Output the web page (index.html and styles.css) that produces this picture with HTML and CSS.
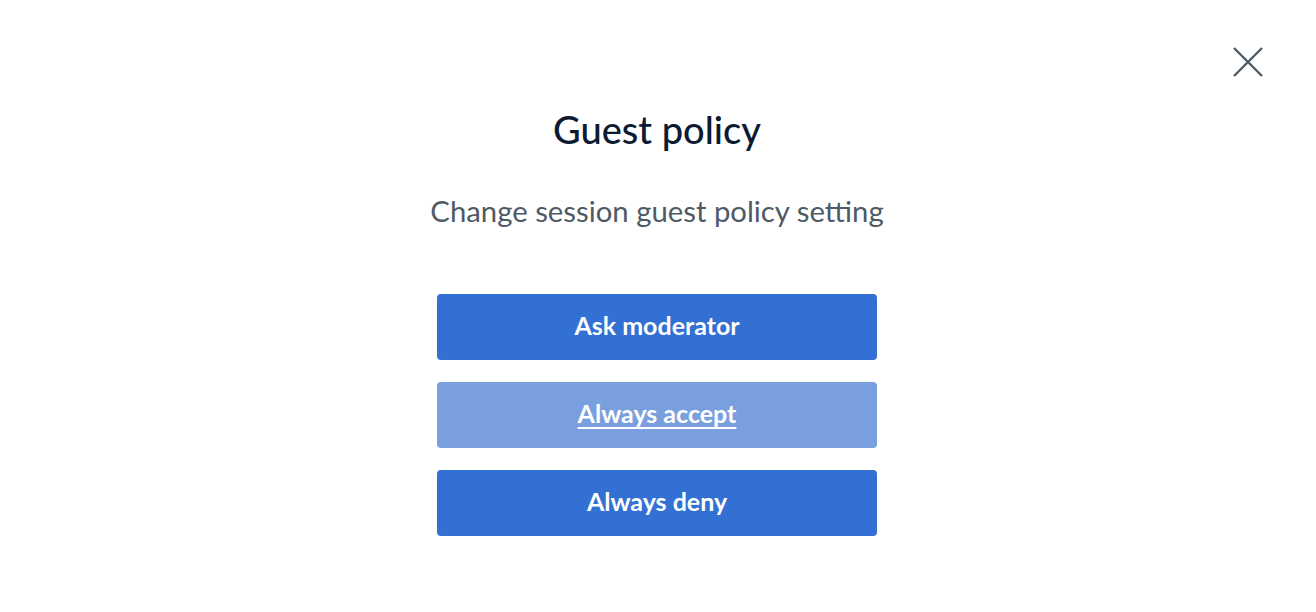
FILE: index.html
```html
<!DOCTYPE html>
<html lang="en">
<head>
<meta charset="utf-8">
<title>Guest policy</title>
<link rel="stylesheet" href="styles.css">
</head>
<body>
<div class="modal">
  <div class="modal-header">
    <button class="close" aria-label="Close">
      <svg width="32" height="32" viewBox="0 0 32 32"><path d="M2 2 L30 30 M30 2 L2 30" stroke="#4e5a66" stroke-width="2.4" fill="none"/></svg>
    </button>
  </div>
  <h1 class="title">Guest policy</h1>
  <p class="subtitle">Change session guest policy setting</p>
  <div class="actions">
    <button class="btn">Ask moderator</button>
    <button class="btn btn-active">Always accept</button>
    <button class="btn">Always deny</button>
  </div>
</div>
</body>
</html>
```
FILE: styles.css
```css
* { box-sizing: border-box; }
html, body { margin: 0; padding: 0; background: #ffffff; }
body { font-family: "Lato", "Noto Sans", sans-serif; width: 1316px; height: 612px; overflow: hidden; }
.modal { display: flex; flex-direction: column; align-items: center; padding-right: 2px; }
.modal-header { align-self: stretch; display: flex; justify-content: flex-end; padding: 46px 50px 0 0; height: 78px; }
.close { width: 32px; height: 32px; padding: 0; border: 0; background: none; display: flex; }
.title { margin: 27px 0 0; font-size: 38px; font-weight: 500; color: #0c1a32; line-height: 48px; }
.subtitle { margin: 40px 0 0; font-size: 29.3px; color: #4e5a66; line-height: 36px; }
.actions { margin-top: 65px; display: flex; flex-direction: column; gap: 22px; }
.btn { width: 440px; height: 66px; padding: 0 0 4px; border: 0; border-radius: 4px; background: #3370d4; color: #fff; font-family: inherit; font-size: 25px; font-weight: 700; }
.btn-active { background: #799fde; text-decoration: underline; text-decoration-thickness: 2px; text-underline-offset: 4px; }
```
